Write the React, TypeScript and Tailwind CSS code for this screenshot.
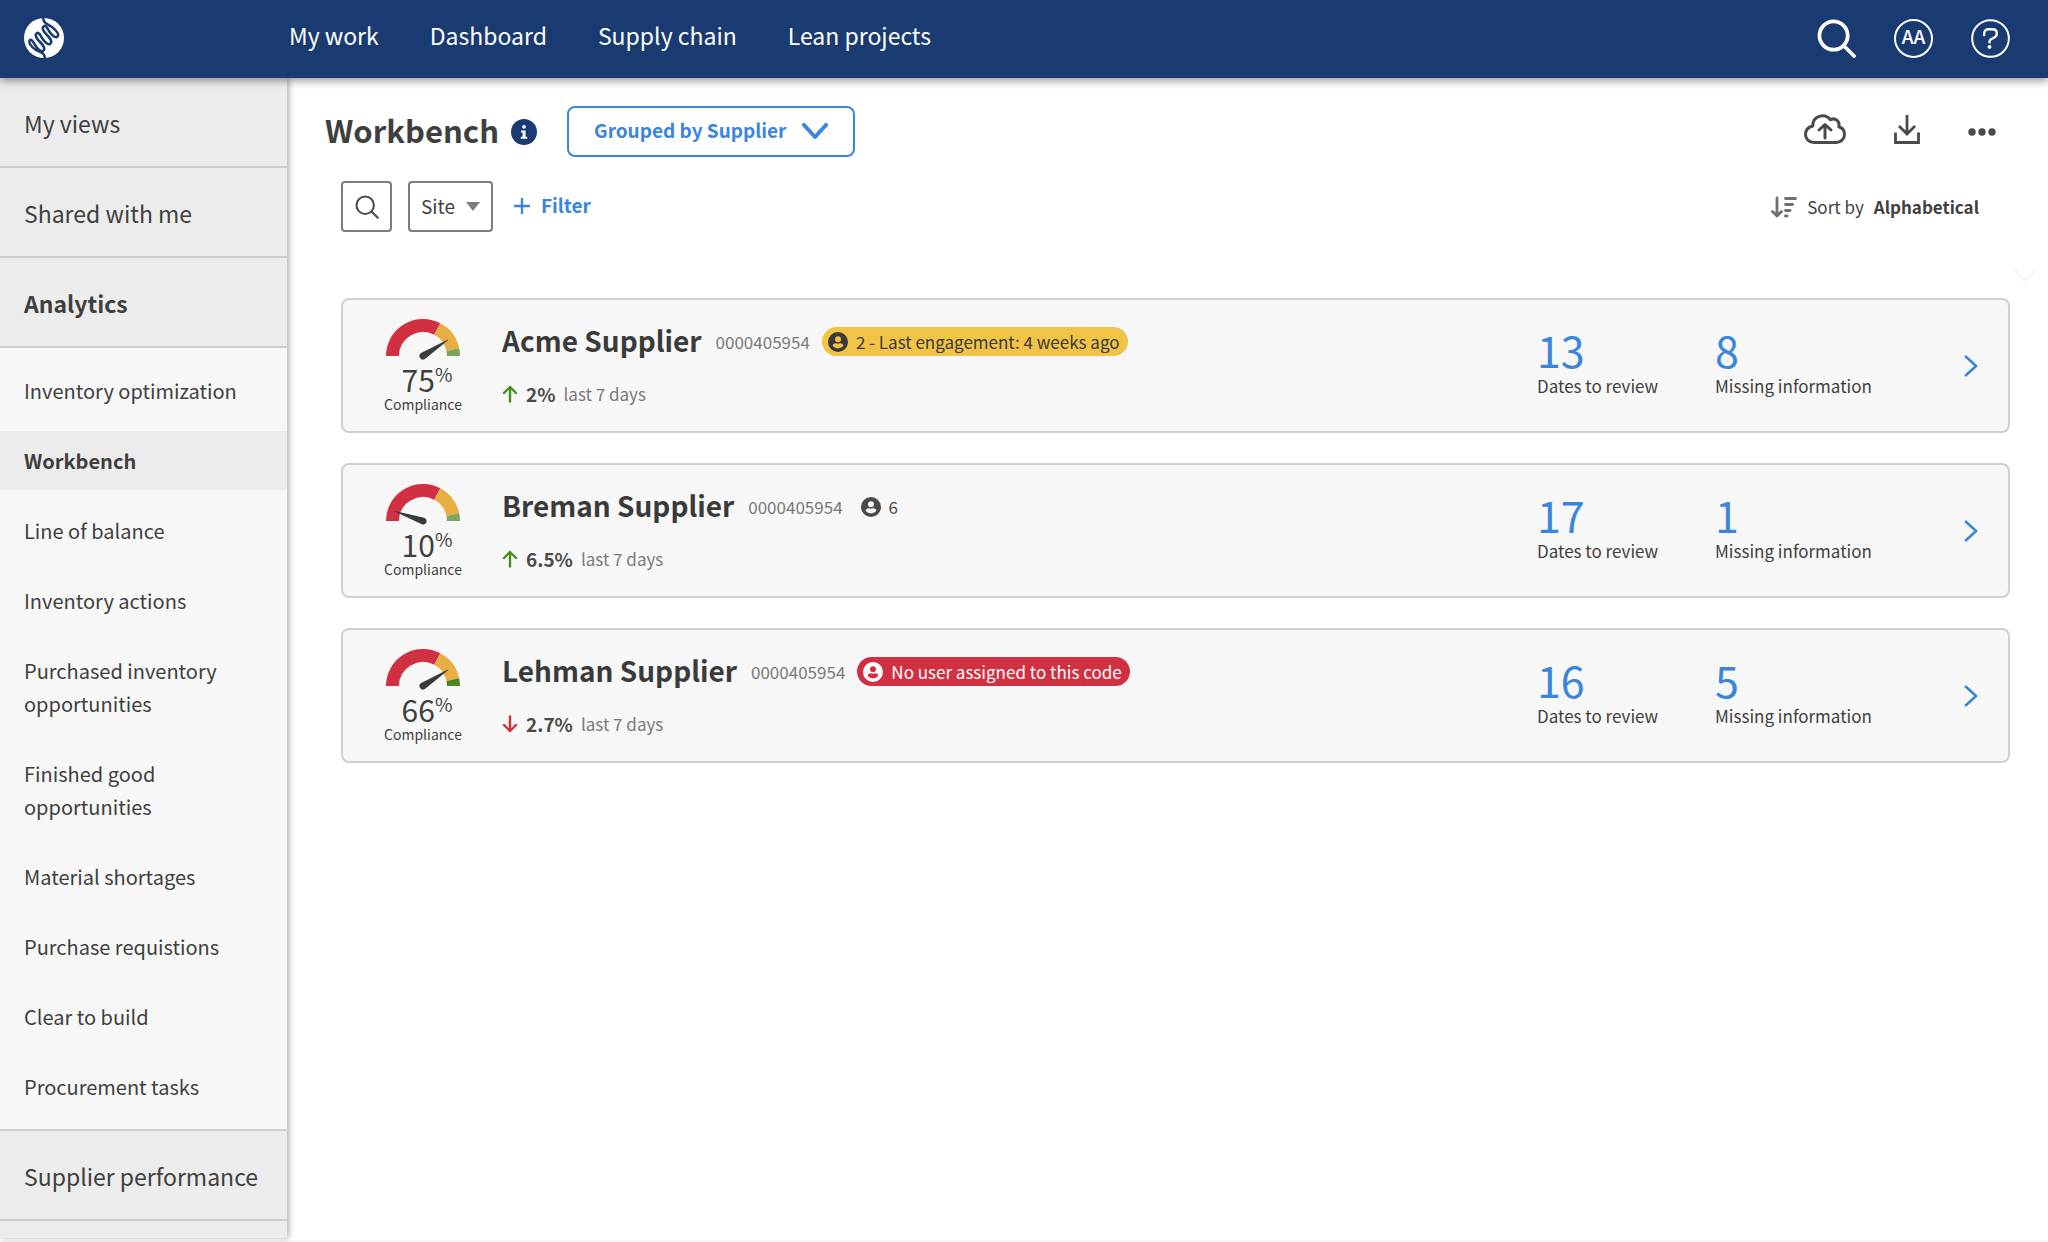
import { useState, type ReactNode } from 'react';

type Badge = { tone: 'plain' | 'warning' | 'danger'; label: string };

type Supplier = {
  name: string;
  code: string;
  compliance: number;
  angle: number;
  goodColor: string;
  trend: 'up' | 'down';
  change: string;
  badge: Badge;
  datesToReview: number;
  missingInfo: number;
};

const NAV_LINKS = ['My work', 'Dashboard', 'Supply chain', 'Lean projects'];

const ANALYTICS_LINKS = [
  'Inventory optimization',
  'Workbench',
  'Line of balance',
  'Inventory actions',
  'Purchased inventory opportunities',
  'Finished good opportunities',
  'Material shortages',
  'Purchase requistions',
  'Clear to build',
  'Procurement tasks',
];

const SUPPLIERS: Supplier[] = [
  {
    name: 'Acme Supplier',
    code: '0000405954',
    compliance: 75,
    angle: -33,
    goodColor: '#7ba65c',
    trend: 'up',
    change: '2%',
    badge: { tone: 'warning', label: '2 - Last engagement: 4 weeks ago' },
    datesToReview: 13,
    missingInfo: 8,
  },
  {
    name: 'Breman Supplier',
    code: '0000405954',
    compliance: 10,
    angle: -161,
    goodColor: '#7ba65c',
    trend: 'up',
    change: '6.5%',
    badge: { tone: 'plain', label: '6' },
    datesToReview: 17,
    missingInfo: 1,
  },
  {
    name: 'Lehman Supplier',
    code: '0000405954',
    compliance: 66,
    angle: -33,
    goodColor: '#4a8522',
    trend: 'down',
    change: '2.7%',
    badge: { tone: 'danger', label: 'No user assigned to this code' },
    datesToReview: 16,
    missingInfo: 5,
  },
];

const BADGE_TONES: Record<Badge['tone'], string> = {
  plain: 'ml-[18px] text-[#4a4a4a]',
  warning: 'ml-3 rounded-full bg-[#f1c445] pr-2 pl-1.5 text-[#3a3a3a]',
  danger: 'ml-3 rounded-full bg-[#d13042] pr-2 pl-1.5 text-white',
};

function Logo() {
  return (
    <svg viewBox="0 0 40 40" className="size-10" aria-hidden="true">
      <circle cx="20" cy="20" r="20" fill="#fff" />
      <path
        d="M19-1C19 5 23 6 28 9C33 13 36 17 33 19c-3 1-6-3-8-6c-2-3-3-6-5-5c-3 2 0 6 3 9c3 3 6 7 3 9c-3 1-6-3-8-6c-2-3-3-6-5-5c-3 2 0 6 3 9c3 3 6 7 3 9c-3 1-6-3-8-6c-2-3-3-6-5-5c-2 2 1 7 6 10C17 34 21 35 21 41"
        fill="none"
        stroke="#193b72"
        strokeWidth="2.5"
      />
    </svg>
  );
}

function Magnifier({ className, strokeWidth }: { className: string; strokeWidth: number }) {
  return (
    <svg
      viewBox="0 0 40 40"
      className={className}
      fill="none"
      stroke="currentColor"
      strokeWidth={strokeWidth}
      strokeLinecap="round"
      aria-hidden="true"
    >
      <circle cx="17" cy="17" r="14.5" />
      <path d="M27.5 27.5L38 38" />
    </svg>
  );
}

function Chevron({ className, strokeWidth }: { className: string; strokeWidth: number }) {
  return (
    <svg
      viewBox="0 0 26 16"
      className={className}
      fill="none"
      stroke="currentColor"
      strokeWidth={strokeWidth}
      strokeLinecap="round"
      strokeLinejoin="round"
      aria-hidden="true"
    >
      <path d="M2 2L13 14L24 2" />
    </svg>
  );
}

function PersonIcon() {
  return (
    <svg viewBox="0 0 20 20" className="size-5 shrink-0" fill="currentColor" aria-hidden="true">
      <path
        fillRule="evenodd"
        d="M10 0a10 10 0 1 0 0 20a10 10 0 0 0 0-20zM10 4.2a3 3 0 1 1 0 6a3 3 0 0 1 0-6zM4.6 13.6c.4-1.6 1.8-2.4 3.2-2.4c.8 0 1.4.5 2.2.5s1.4-.5 2.2-.5c1.4 0 2.8.8 3.2 2.4c-1 1.8-3 2.8-5.4 2.8s-4.4-1-5.4-2.8z"
      />
    </svg>
  );
}

function TrendArrow({ trend }: { trend: Supplier['trend'] }) {
  return (
    <svg
      viewBox="0 0 16 18"
      className={trend === 'up' ? 'h-[18px] w-4 text-[#4a8b1f]' : 'h-[18px] w-4 text-[#d13042]'}
      fill="none"
      stroke="currentColor"
      strokeWidth="2.4"
      strokeLinecap="round"
      strokeLinejoin="round"
      aria-hidden="true"
    >
      {trend === 'up' ? <path d="M8 16.5V2M2 8L8 2L14 8" /> : <path d="M8 1.5V16M2 10L8 16L14 10" />}
    </svg>
  );
}

function Gauge({ angle, goodColor }: { angle: number; goodColor: string }) {
  return (
    <svg viewBox="0 0 76 42" className="h-[42px] w-[76px]" aria-hidden="true">
      <g fill="none" strokeWidth="13">
        <path d="M7.5 38A30.5 30.5 0 0 1 52.3 11.07" stroke="#d13042" />
        <path d="M52.3 11.07A30.5 30.5 0 0 1 67.83 31.66" stroke="#e8ae44" />
        <path d="M67.83 31.66A30.5 30.5 0 0 1 68.5 38" stroke={goodColor} />
      </g>
      <path
        d="M38 34.5L68 37.7V38.3L38 41.5A3.5 3.5 0 0 1 38 34.5z"
        fill="#3a3b3d"
        transform={`rotate(${angle} 38 38)`}
      />
    </svg>
  );
}

function SidebarSection({ label, active = false }: { label: string; active?: boolean }) {
  return (
    <a
      href="#"
      className={`flex h-[90px] items-center border-b-2 border-[#cecece] bg-[#ececec] px-6 pt-0.5 text-[23px] ${
        active ? 'font-bold' : ''
      }`}
    >
      {label}
    </a>
  );
}

function IconButton({
  label,
  className = '',
  children,
}: {
  label: string;
  className?: string;
  children: ReactNode;
}) {
  return (
    <button
      type="button"
      aria-label={label}
      className={`flex items-center justify-center ${className}`}
    >
      {children}
    </button>
  );
}

function Stat({ value, label }: { value: number; label: string }) {
  return (
    <div className="pb-1.5">
      <p className="text-[43px] leading-[42px] text-[#3a85de]">{value}</p>
      <p className="pt-1 text-[17px] leading-6">{label}</p>
    </div>
  );
}

function SupplierCard({ supplier }: { supplier: Supplier }) {
  return (
    <li className="flex min-h-[135px] items-center rounded-lg border-2 border-[#d0d0d0] bg-[#f7f7f7] pr-[26px] pl-8">
      <div className="flex w-24 flex-col items-center">
        <Gauge angle={supplier.angle} goodColor={supplier.goodColor} />
        <p className="flex pt-1 pl-2 text-[30px] leading-[30px]">
          {supplier.compliance}
          <span className="text-[19px] leading-5">%</span>
        </p>
        <p className="text-sm leading-5">Compliance</p>
      </div>

      <div className="ml-[31px] flex-1 pb-0.5">
        <div className="flex items-center">
          <h2 className="pb-1 text-[28px] leading-9 font-bold text-[#3a3a3a]">{supplier.name}</h2>
          <span className="ml-[14px] text-[17px] text-[#7a7a7a]">{supplier.code}</span>
          <span
            className={`flex h-[29px] items-center gap-2 text-[17px] ${BADGE_TONES[supplier.badge.tone]}`}
          >
            <PersonIcon />
            {supplier.badge.label}
          </span>
        </div>
        <p className="mt-[18px] flex items-center text-[#7a7a7a]">
          <TrendArrow trend={supplier.trend} />
          <span className="ml-2 text-[19px] leading-7 font-bold text-[#4a4a4a]">{supplier.change}</span>
          <span className="ml-2 text-[17px] leading-7">last 7 days</span>
        </p>
      </div>

      <div className="grid grid-cols-[178px_245px]">
        <Stat value={supplier.datesToReview} label="Dates to review" />
        <Stat value={supplier.missingInfo} label="Missing information" />
      </div>
      <IconButton label={`Open ${supplier.name}`}>
        <Chevron className="h-[14px] w-[22px] -rotate-90 text-[#3a85de]" strokeWidth={3} />
      </IconButton>
    </li>
  );
}

export default function App() {
  const [activeLink, setActiveLink] = useState('Workbench');

  return (
    <div className="flex min-h-screen flex-col bg-white font-['Noto_Sans_CJK_SC',sans-serif] text-[#3f3f3f]">
      <header className="relative z-10 flex h-[78px] items-center bg-[#193b72] px-6 pb-0.5 text-white shadow-[0_3px_8px_rgba(0,0,0,0.4)]">
        <a href="#" aria-label="Home" className="w-[265px]">
          <Logo />
        </a>
        <nav className="flex flex-1 gap-[51px] pb-1.5 text-[23px]">
          {NAV_LINKS.map((link) => (
            <a key={link} href="#">
              {link}
            </a>
          ))}
        </nav>
        <div className="flex items-center gap-[38px] pr-[14px]">
          <IconButton label="Search">
            <Magnifier className="size-[39px]" strokeWidth={3.8} />
          </IconButton>
          <button
            type="button"
            className="flex size-[39px] items-center justify-center rounded-full border-2 border-white pb-1 text-[19px] font-medium"
          >
            AA
          </button>
          <IconButton label="Help">
            <svg viewBox="0 0 40 40" className="size-[39px]" fill="none" stroke="currentColor" aria-hidden="true">
              <circle cx="20" cy="20" r="18.8" strokeWidth="2" />
              <path
                d="M13.5 16.5V15C13.5 12 15.5 10.5 18 10.5H22C24.5 10.5 26.5 12 26.5 14.8C26.5 17 25.5 18.2 23.5 19.2L20.5 20.8C19.5 21.4 19 22.2 19 23.3V24"
                strokeWidth="2.4"
                strokeLinecap="round"
              />
              <circle cx="19" cy="28.6" r="2" fill="currentColor" stroke="none" />
            </svg>
          </IconButton>
        </div>
      </header>

      <div className="flex flex-1">
        <aside className="relative w-[287px] shrink-0 bg-[#ececec] shadow-[2px_0_6px_rgba(0,0,0,0.3)]">
          <SidebarSection label="My views" />
          <SidebarSection label="Shared with me" />
          <SidebarSection label="Analytics" active />
          <ul className="flex flex-col gap-[11px] border-b-2 border-[#cecece] bg-[#f7f7f7] py-[13px]">
            {ANALYTICS_LINKS.map((link) => (
              <li key={link}>
                <a
                  href="#"
                  onClick={() => setActiveLink(link)}
                  className={`block px-6 py-[13px] text-xl leading-[33px] ${
                    link === activeLink ? 'bg-[#ececec] font-bold' : ''
                  }`}
                >
                  {link}
                </a>
              </li>
            ))}
          </ul>
          <SidebarSection label="Supplier performance" />
        </aside>

        <main className="flex-1 px-[38px] pt-7">
          <div className="flex items-center">
            <h1 className="pb-1 text-[31px] leading-[47px] font-bold">Workbench</h1>
            <svg viewBox="0 0 26 26" className="ml-3 size-[26px]" aria-label="About this page">
              <circle cx="13" cy="13" r="13" fill="#193b72" />
              <circle cx="13" cy="7.8" r="1.9" fill="#fff" />
              <path d="M10 11.4H14.6V17.8H16.2V19.8H9.8V17.8H11.6V13.4H10z" fill="#fff" />
            </svg>
            <button
              type="button"
              className="ml-[30px] flex h-[51px] items-center gap-4 rounded-lg border-2 border-[#3a85de] px-[25px] pb-0.5 text-[19px] font-bold text-[#3a85de]"
            >
              Grouped by Supplier
              <Chevron className="h-4 w-[26px]" strokeWidth={4} />
            </button>
            <div className="ml-auto flex items-center gap-12 pr-[14px] text-[#4a4a4a]">
              <IconButton label="Upload" className="pb-1.5">
                <svg
                  viewBox="0 0 42 30"
                  className="h-[30px] w-[42px]"
                  fill="none"
                  stroke="currentColor"
                  strokeWidth="3"
                  strokeLinecap="round"
                  strokeLinejoin="round"
                  aria-hidden="true"
                >
                  <path d="M10 28.5H32C37 28.5 40.5 24.8 40.5 20.5C40.5 16.5 38 13.8 34.8 12.8C36.2 7 31 3.2 26.5 5.8C20.5-1.5 8.5 2 8.8 12C4.5 13 1.5 16 1.5 20.5C1.5 25 5 28.5 10 28.5z" />
                  <path d="M21 24V11M15 16L21 10.5L27 16" />
                </svg>
              </IconButton>
              <IconButton label="Download" className="pb-1.5">
                <svg
                  viewBox="0 0 26 30"
                  className="h-[30px] w-[26px]"
                  fill="none"
                  stroke="currentColor"
                  strokeWidth="2.8"
                  aria-hidden="true"
                >
                  <path d="M13 1V20M5 12L13 20L21 12" />
                  <path d="M1.5 18.5V28.5H24.5V18.5" />
                </svg>
              </IconButton>
              <IconButton label="More actions">
                <svg viewBox="0 0 28 8" className="h-2 w-7" fill="currentColor" aria-hidden="true">
                  <circle cx="4" cy="4" r="3.7" />
                  <circle cx="14" cy="4" r="3.7" />
                  <circle cx="24" cy="4" r="3.7" />
                </svg>
              </IconButton>
            </div>
          </div>

          <div className="mt-6 flex items-center pl-4">
            <button
              type="button"
              aria-label="Search suppliers"
              className="flex size-[51px] items-center justify-center rounded-sm border-2 border-[#7d7d7d] text-[#4a4a4a]"
            >
              <Magnifier className="size-6" strokeWidth={3.4} />
            </button>
            <button
              type="button"
              className="ml-4 flex h-[51px] items-center gap-[11px] rounded-sm border-2 border-[#7d7d7d] px-[11px] text-[19px]"
            >
              Site
              <svg viewBox="0 0 14 9" className="h-[9px] w-[14px]" fill="#7d7d7d" aria-hidden="true">
                <path d="M0 0H14L7 9z" />
              </svg>
            </button>
            <button
              type="button"
              className="ml-5 flex items-center gap-[10px] pb-0.5 text-[19px] font-bold text-[#3a85de]"
            >
              <svg viewBox="0 0 18 18" className="size-[18px]" stroke="currentColor" strokeWidth="2.4" aria-hidden="true">
                <path d="M9 1V17M1 9H17" />
              </svg>
              Filter
            </button>
            <button type="button" className="ml-auto flex items-center pr-[31px] text-[17px]">
              <svg
                viewBox="0 0 26 22"
                className="h-[22px] w-[26px] text-[#6f6f6f]"
                fill="none"
                stroke="currentColor"
                strokeWidth="2.8"
                strokeLinecap="round"
                strokeLinejoin="round"
                aria-hidden="true"
              >
                <path d="M6 2V19.5M1.5 15.5L6 20L10.5 15.5" />
                <path d="M14.5 2.5H24.5M14.5 8.5H21.5M14.5 14.5H19M14.5 20H16" />
              </svg>
              <span className="ml-[10px]">Sort by</span>
              <span className="ml-[10px] font-bold">Alphabetical</span>
            </button>
          </div>

          <div className="relative mt-[66px]">
            <Chevron className="absolute -top-[31px] -right-7 h-4 w-[26px] text-[#f7f7f7]" strokeWidth={3} />
            <ul className="flex flex-col gap-[30px] pl-4">
              {SUPPLIERS.map((supplier) => (
                <SupplierCard key={supplier.name} supplier={supplier} />
              ))}
            </ul>
          </div>
        </main>
      </div>
      <footer className="h-1 border-b-2 border-[#f5f5f5] bg-white" />
    </div>
  );
}
